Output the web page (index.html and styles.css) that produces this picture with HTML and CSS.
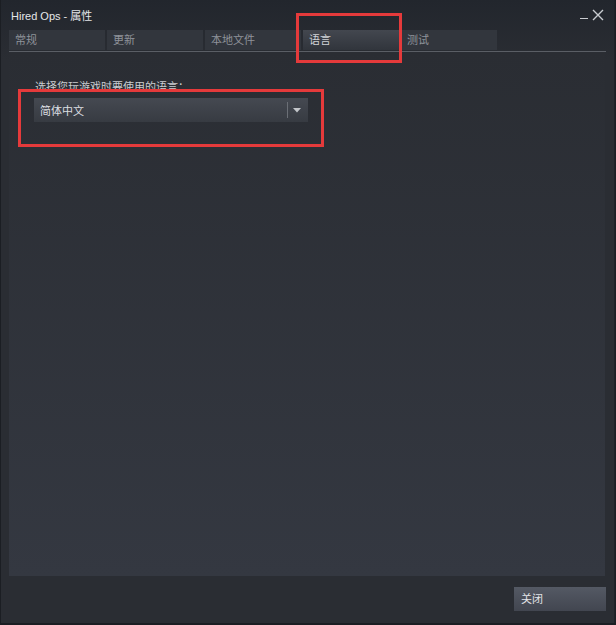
FILE: index.html
```html
<!DOCTYPE html>
<html lang="zh-CN">
<head>
<meta charset="utf-8">
<title>Hired Ops - 属性</title>
<link rel="stylesheet" href="styles.css">
</head>
<body>
<div class="window">
  <div class="titlebar">
    <span class="title">Hired Ops - 属性</span>
    <div class="controls">
      <span class="min"></span>
      <svg class="close" width="12" height="12" viewBox="0 0 12 12"><path d="M1 1L11 11M11 1L1 11" stroke="#c9ccd0" stroke-width="1.4" fill="none"/></svg>
    </div>
  </div>
  <div class="tabs">
    <div class="tab">常规</div>
    <div class="tab">更新</div>
    <div class="tab">本地文件</div>
    <div class="tab active">语言</div>
    <div class="tab">测试</div>
  </div>
  <div class="panel">
    <div class="label">选择您玩游戏时要使用的语言：</div>
    <div class="select">
      <span class="value">简体中文</span>
      <span class="sep"></span>
      <svg class="arrow" width="8" height="5" viewBox="0 0 8 5"><path d="M0 0H8L4 4.5Z" fill="#c3c6ca"/></svg>
    </div>
  </div>
  <div class="footer">
    <div class="btn">关闭</div>
  </div>
  <div class="mark mark-tab"></div>
  <div class="mark mark-select"></div>
</div>
</body>
</html>
```
FILE: styles.css
```css
* { box-sizing: border-box; }
html, body { margin: 0; padding: 0; }
body {
  width: 616px;
  height: 625px;
  overflow: hidden;
  background: #1b1e23;
  font-family: "Liberation Sans", "Noto Sans CJK SC", sans-serif;
  font-size: 12px;
}
.window {
  position: relative;
  width: 614px;
  height: 623px;
  margin-left: 1px;
  background: linear-gradient(#22262d 0, #2a2d33 60px, #2a2d33 100%);
  border-right: 1px solid #1f2228;
  display: flex;
  flex-direction: column;
}
.titlebar {
  height: 30px;
  display: flex;
  align-items: flex-start;
  justify-content: space-between;
  padding: 9px 10px 0 10px;
}
.title {
  color: #e4e6e9;
  font-size: 11px;
  line-height: 14px;
}
.controls {
  display: flex;
  align-items: flex-end;
  gap: 4px;
  padding-top: 0;
}
.min {
  width: 8px;
  height: 1px;
  background: #c9ccd0;
  margin-bottom: 2px;
}
.close { display: block; }
.tabs {
  margin: 0 8px 0 8px;
  height: 22px;
  display: flex;
  gap: 2px;
  border-bottom: 1px solid #5a5e65;
}
.tab {
  width: 96px;
  height: 20px;
  padding-left: 6px;
  background: #32363d;
  color: #8f939a;
  line-height: 20px;
  font-size: 11px;
}
.tab.active {
  background: linear-gradient(#43474f, #31353c);
  color: #cfd2d6;
}
.panel {
  margin: 0 9px 0 8px;
  height: 524px;
  background: linear-gradient(#2a2d33, #343841);
  padding: 28px 0 0 26px;
}
.label {
  color: #c9ccd0;
  font-size: 11px;
  line-height: 14px;
}
.select {
  margin-top: 4px;
  margin-left: -1px;
  width: 274px;
  height: 24px;
  background: linear-gradient(#454951, #373b42);
  display: flex;
  align-items: center;
  padding-left: 6px;
}
.value {
  color: #dcdfe2;
  flex: 1;
  font-size: 11px;
}
.sep {
  width: 1px;
  height: 16px;
  background: #6b6f76;
  margin-right: 5px;
}
.arrow { margin-right: 7px; display: block; }
.footer {
  flex: 1;
  display: flex;
  justify-content: flex-end;
  align-items: flex-start;
  padding: 11px 8px 0 0;
}
.btn {
  width: 92px;
  height: 24px;
  background: linear-gradient(#545964, #424650);
  color: #e2e4e7;
  padding-left: 7px;
  line-height: 24px;
  font-size: 11px;
}
.mark {
  position: absolute;
  border: 3px solid #e53a3b;
  pointer-events: none;
}
.mark-tab { left: 295px; top: 13px; width: 106px; height: 50px; }
.mark-select { left: 17px; top: 89px; width: 306px; height: 58px; }
```
